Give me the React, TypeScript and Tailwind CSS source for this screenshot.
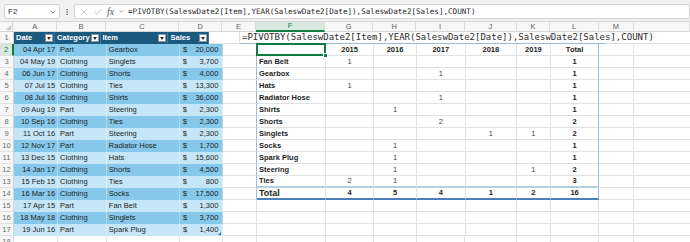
import { Check, ChevronDown, EllipsisVertical, X } from 'lucide-react';

type SaleRow = [string, string, string, string];

const SALES: SaleRow[] = [
  ['04 Apr 17', 'Part', 'Gearbox', '20,000'],
  ['04 May 19', 'Clothing', 'Singlets', '3,700'],
  ['06 Jun 17', 'Clothing', 'Shorts', '4,000'],
  ['07 Jul 15', 'Clothing', 'Ties', '13,300'],
  ['08 Jul 16', 'Clothing', 'Shirts', '36,000'],
  ['09 Aug 19', 'Part', 'Steering', '2,300'],
  ['10 Sep 16', 'Clothing', 'Ties', '2,300'],
  ['11 Oct 16', 'Part', 'Steering', '2,300'],
  ['12 Nov 17', 'Part', 'Radiator Hose', '1,700'],
  ['13 Dec 15', 'Clothing', 'Hats', '15,600'],
  ['14 Jan 17', 'Clothing', 'Shorts', '4,500'],
  ['15 Feb 15', 'Clothing', 'Ties', '800'],
  ['16 Mar 16', 'Clothing', 'Socks', '17,500'],
  ['17 Apr 15', 'Part', 'Fan Belt', '1,300'],
  ['18 May 18', 'Clothing', 'Singlets', '3,700'],
  ['19 Jun 16', 'Part', 'Spark Plug', '1,400'],
];

// label, 2015..2019, total
const PIVOT: (string | number)[][] = [
  ['Fan Belt', 1, '', '', '', '', 1],
  ['Gearbox', '', '', 1, '', '', 1],
  ['Hats', 1, '', '', '', '', 1],
  ['Radiator Hose', '', '', 1, '', '', 1],
  ['Shirts', '', 1, '', '', '', 1],
  ['Shorts', '', '', 2, '', '', 2],
  ['Singlets', '', '', '', 1, 1, 2],
  ['Socks', '', 1, '', '', '', 1],
  ['Spark Plug', '', 1, '', '', '', 1],
  ['Steering', '', 1, '', '', 1, 2],
  ['Ties', 2, 1, '', '', '', 3],
];

const TOTALS = ['Total', 4, 5, 4, 1, 2, 16];

const FORMULA = '=PIVOTBY(SaleswDate2[Item],YEAR(SaleswDate2[Date]),SaleswDate2[Sales],COUNT)';

// widths of columns G..L (pivot value columns)
const PIVOT_W = ['w-[51px]', 'w-[46px]', 'w-[52px]', 'w-[55px]', 'w-[36px]', 'w-[52px]'];

const GRID = 'border-[#e1e1e1]';

function RowHead({ n, active }: { n: number; active?: boolean }) {
  return (
    <div
      className={`flex w-[14px] shrink-0 items-center justify-center border-b ${GRID} ${
        active
          ? 'border-r-2 border-r-[#107c41] bg-[#d9e8de] text-[#107c41]'
          : 'border-r border-r-[#d4d4d4] bg-[#f7f7f7] text-[#6b6b6b]'
      }`}
    >
      {n}
    </div>
  );
}

function FilterBtn() {
  return (
    <span className="ml-auto mr-[1px] flex h-[8px] w-[8px] shrink-0 items-center justify-center border border-[#8a9aa6] bg-white">
      <span className="h-0 w-0 border-x-[2px] border-t-[3px] border-x-transparent border-t-[#333]" />
    </span>
  );
}

function HeaderRow() {
  const head = 'flex h-full items-center border-r border-r-[#3d7597] bg-[#1b5a7e] pl-[2px] font-bold text-white';
  return (
    <div className="flex h-[12px]">
      <RowHead n={1} />
      <div className={`${head} w-[47px]`}>Date<FilterBtn /></div>
      <div className={`${head} w-[52px]`}>Category<FilterBtn /></div>
      <div className={`${head} w-[78px]`}>Item<FilterBtn /></div>
      <div className={`${head} w-[46px]`}>Sales<FilterBtn /></div>
      <div className={`w-[36px] border-r border-b ${GRID}`} />
      {/* formula spills over F1:M1 */}
      <div className="w-[366px] whitespace-nowrap border-b border-b-[#9cbde2] pl-[2px] font-['DejaVu_Sans_Mono',monospace] text-[9px] leading-[11px] text-[#2b2b2b]">
        {FORMULA}
      </div>
      <div className={`w-[37px] border-b ${GRID}`} />
      <div className={`w-[60px] border-b ${GRID}`} />
    </div>
  );
}

function PivotCells({ r }: { r: number }) {
  // r: sheet row number (2..14)
  const blueR = 'border-r border-r-[#9cbde2]';
  if (r === 2) {
    return (
      <>
        <div className={`relative w-[74px] border-r border-b ${GRID}`}>
          <div className="absolute -left-px -top-px -right-px -bottom-px border-2 border-[#107c41]" />
          <div className="absolute -right-[3px] -bottom-[3px] h-[5px] w-[5px] border border-white bg-[#107c41]" />
        </div>
        {['2015', '2016', '2017', '2018', '2019', 'Total'].map((y, i) => (
          <div
            key={y}
            className={`${PIVOT_W[i]} flex items-center justify-center border-b ${GRID} font-bold ${
              i === 5 ? blueR : `border-r ${GRID}`
            }`}
          >
            {y}
          </div>
        ))}
      </>
    );
  }
  const isTotal = r === 14;
  const data = isTotal ? TOTALS : PIVOT[r - 3];
  const bottom = isTotal
    ? 'border-b-2 border-b-[#4b7fb9]'
    : r === 13
    ? 'border-b-2 border-b-[#b3d2de]'
    : `border-b ${GRID}`;
  return (
    <>
      <div
        className={`flex w-[74px] items-center border-r ${GRID} ${bottom} pl-[2px] font-bold ${
          isTotal ? 'text-[9px]' : ''
        }`}
      >
        {data[0]}
      </div>
      {data.slice(1).map((v, i) => (
        <div
          key={i}
          className={`${PIVOT_W[i]} flex items-center justify-center ${bottom} ${
            i === 5 ? blueR : `border-r ${GRID}`
          } ${i === 5 || isTotal ? 'font-bold' : 'text-[#444]'}`}
        >
          {v}
        </div>
      ))}
    </>
  );
}

function DataRow({ r, row }: { r: number; row?: SaleRow }) {
  const dark = r % 2 === 0;
  const band = dark ? 'bg-[#85c8e9]' : 'bg-[#c5e6f6]';
  const cell = `flex h-full items-center border-r border-r-[#ffffff55] ${band}`;
  const inPivot = r >= 2 && r <= 14;
  return (
    <div className="flex h-[12px]">
      <RowHead n={r} active={r === 2} />
      {row ? (
        <>
          <div className={`${cell} w-[47px] justify-end pr-[2px]`}>{row[0]}</div>
          <div className={`${cell} w-[52px] pl-[2px]`}>{row[1]}</div>
          <div className={`${cell} w-[78px] pl-[2px]`}>{row[2]}</div>
          <div className={`${cell} relative w-[46px] justify-between pl-[3px] pr-[4px]`}>
            <span>$</span>
            <span>{row[3]}</span>
            {r === 17 && (
              <span className="absolute bottom-[1px] right-[1px] h-0 w-0 border-l-[3px] border-t-[3px] border-l-transparent border-t-transparent border-b-0 border-r-[3px] border-r-[#2f6fa8]" />
            )}
          </div>
        </>
      ) : (
        <>
          <div className={`w-[47px] border-r border-b ${GRID}`} />
          <div className={`w-[52px] border-r border-b ${GRID}`} />
          <div className={`w-[78px] border-r border-b ${GRID}`} />
          <div className={`w-[46px] border-r border-b ${GRID}`} />
        </>
      )}
      <div
        className={`w-[36px] border-b ${GRID} ${
          inPivot ? 'border-r border-r-[#9cbde2]' : `border-r ${GRID}`
        }`}
      />
      {inPivot ? (
        <PivotCells r={r} />
      ) : (
        <>
          <div className={`w-[74px] border-r border-b ${GRID}`} />
          {PIVOT_W.map((w, i) => (
            <div key={i} className={`${w} border-r border-b ${GRID}`} />
          ))}
        </>
      )}
      <div className={`w-[37px] border-r border-b ${GRID}`} />
      <div className={`w-[60px] border-b ${GRID}`} />
    </div>
  );
}

const LETTERS: [string, string][] = [
  ['A', 'w-[47px]'],
  ['B', 'w-[52px]'],
  ['C', 'w-[78px]'],
  ['D', 'w-[46px]'],
  ['E', 'w-[36px]'],
  ['F', 'w-[74px]'],
  ['G', 'w-[51px]'],
  ['H', 'w-[46px]'],
  ['I', 'w-[52px]'],
  ['J', 'w-[55px]'],
  ['K', 'w-[36px]'],
  ['L', 'w-[52px]'],
  ['M', 'w-[37px]'],
  ['', 'w-[60px]'],
];

export default function App() {
  return (
    <div className="h-[242px] w-[690px] overflow-hidden bg-white font-['Liberation_Sans',Arial,sans-serif] text-[7.5px] leading-none text-[#1e1e1e]">
      {/* Formula bar */}
      <div className="flex h-[22px] items-center gap-[3px] border-b border-[#d6d6d6] bg-[#f1f1f1] pl-[4px] pt-[2px]">
        <div className="flex h-[15px] w-[56px] items-center justify-between rounded-[2px] border border-[#d2d2d2] bg-white pl-[3px] pr-[2px]">
          <span className="text-[8px] text-[#333]">F2</span>
          <ChevronDown className="h-[8px] w-[8px] text-[#555]" strokeWidth={2} />
        </div>
        <EllipsisVertical className="h-[10px] w-[8px] text-[#666]" strokeWidth={2.5} />
        <div className="flex h-[15px] flex-1 items-center rounded-[2px] border border-[#d2d2d2] bg-white">
          <div className="flex w-[52px] shrink-0 items-center gap-[4px] pl-[4px] text-[#a6a6a6]">
            <X className="h-[10px] w-[10px]" strokeWidth={1.5} />
            <Check className="h-[10px] w-[10px]" strokeWidth={1.5} />
            <span className="font-['Liberation_Serif',serif] text-[10px] italic text-[#555]">fx</span>
            <ChevronDown className="h-[7px] w-[7px] text-[#777]" strokeWidth={2} />
          </div>
          <span className="whitespace-nowrap pl-[1px] font-['DejaVu_Sans_Mono',monospace] text-[7.6px] text-[#2a2a2a]">
            {FORMULA}
          </span>
        </div>
      </div>

      {/* Column letters */}
      <div className="flex h-[10px] bg-[#f7f7f7] text-[#5e5e5e]">
        <div className="relative w-[14px] border-r border-b border-[#d4d4d4]">
          <span className="absolute bottom-[1px] right-[1px] h-0 w-0 border-l-[5px] border-t-[5px] border-l-transparent border-t-transparent border-b-0 border-r-[5px] border-r-[#c8c8c8]" />
        </div>
        {LETTERS.map(([l, w]) => (
          <div
            key={w + l}
            className={`${w} flex items-center justify-center border-r border-r-[#dcdcdc] ${
              l === 'F'
                ? 'border-b-2 border-b-[#107c41] bg-[#d9e8de] text-[#107c41]'
                : 'border-b border-b-[#d4d4d4]'
            }`}
          >
            {l}
          </div>
        ))}
      </div>

      <HeaderRow />
      {SALES.map((row, i) => (
        <DataRow key={i} r={i + 2} row={row} />
      ))}
      <DataRow r={18} />
    </div>
  );
}
